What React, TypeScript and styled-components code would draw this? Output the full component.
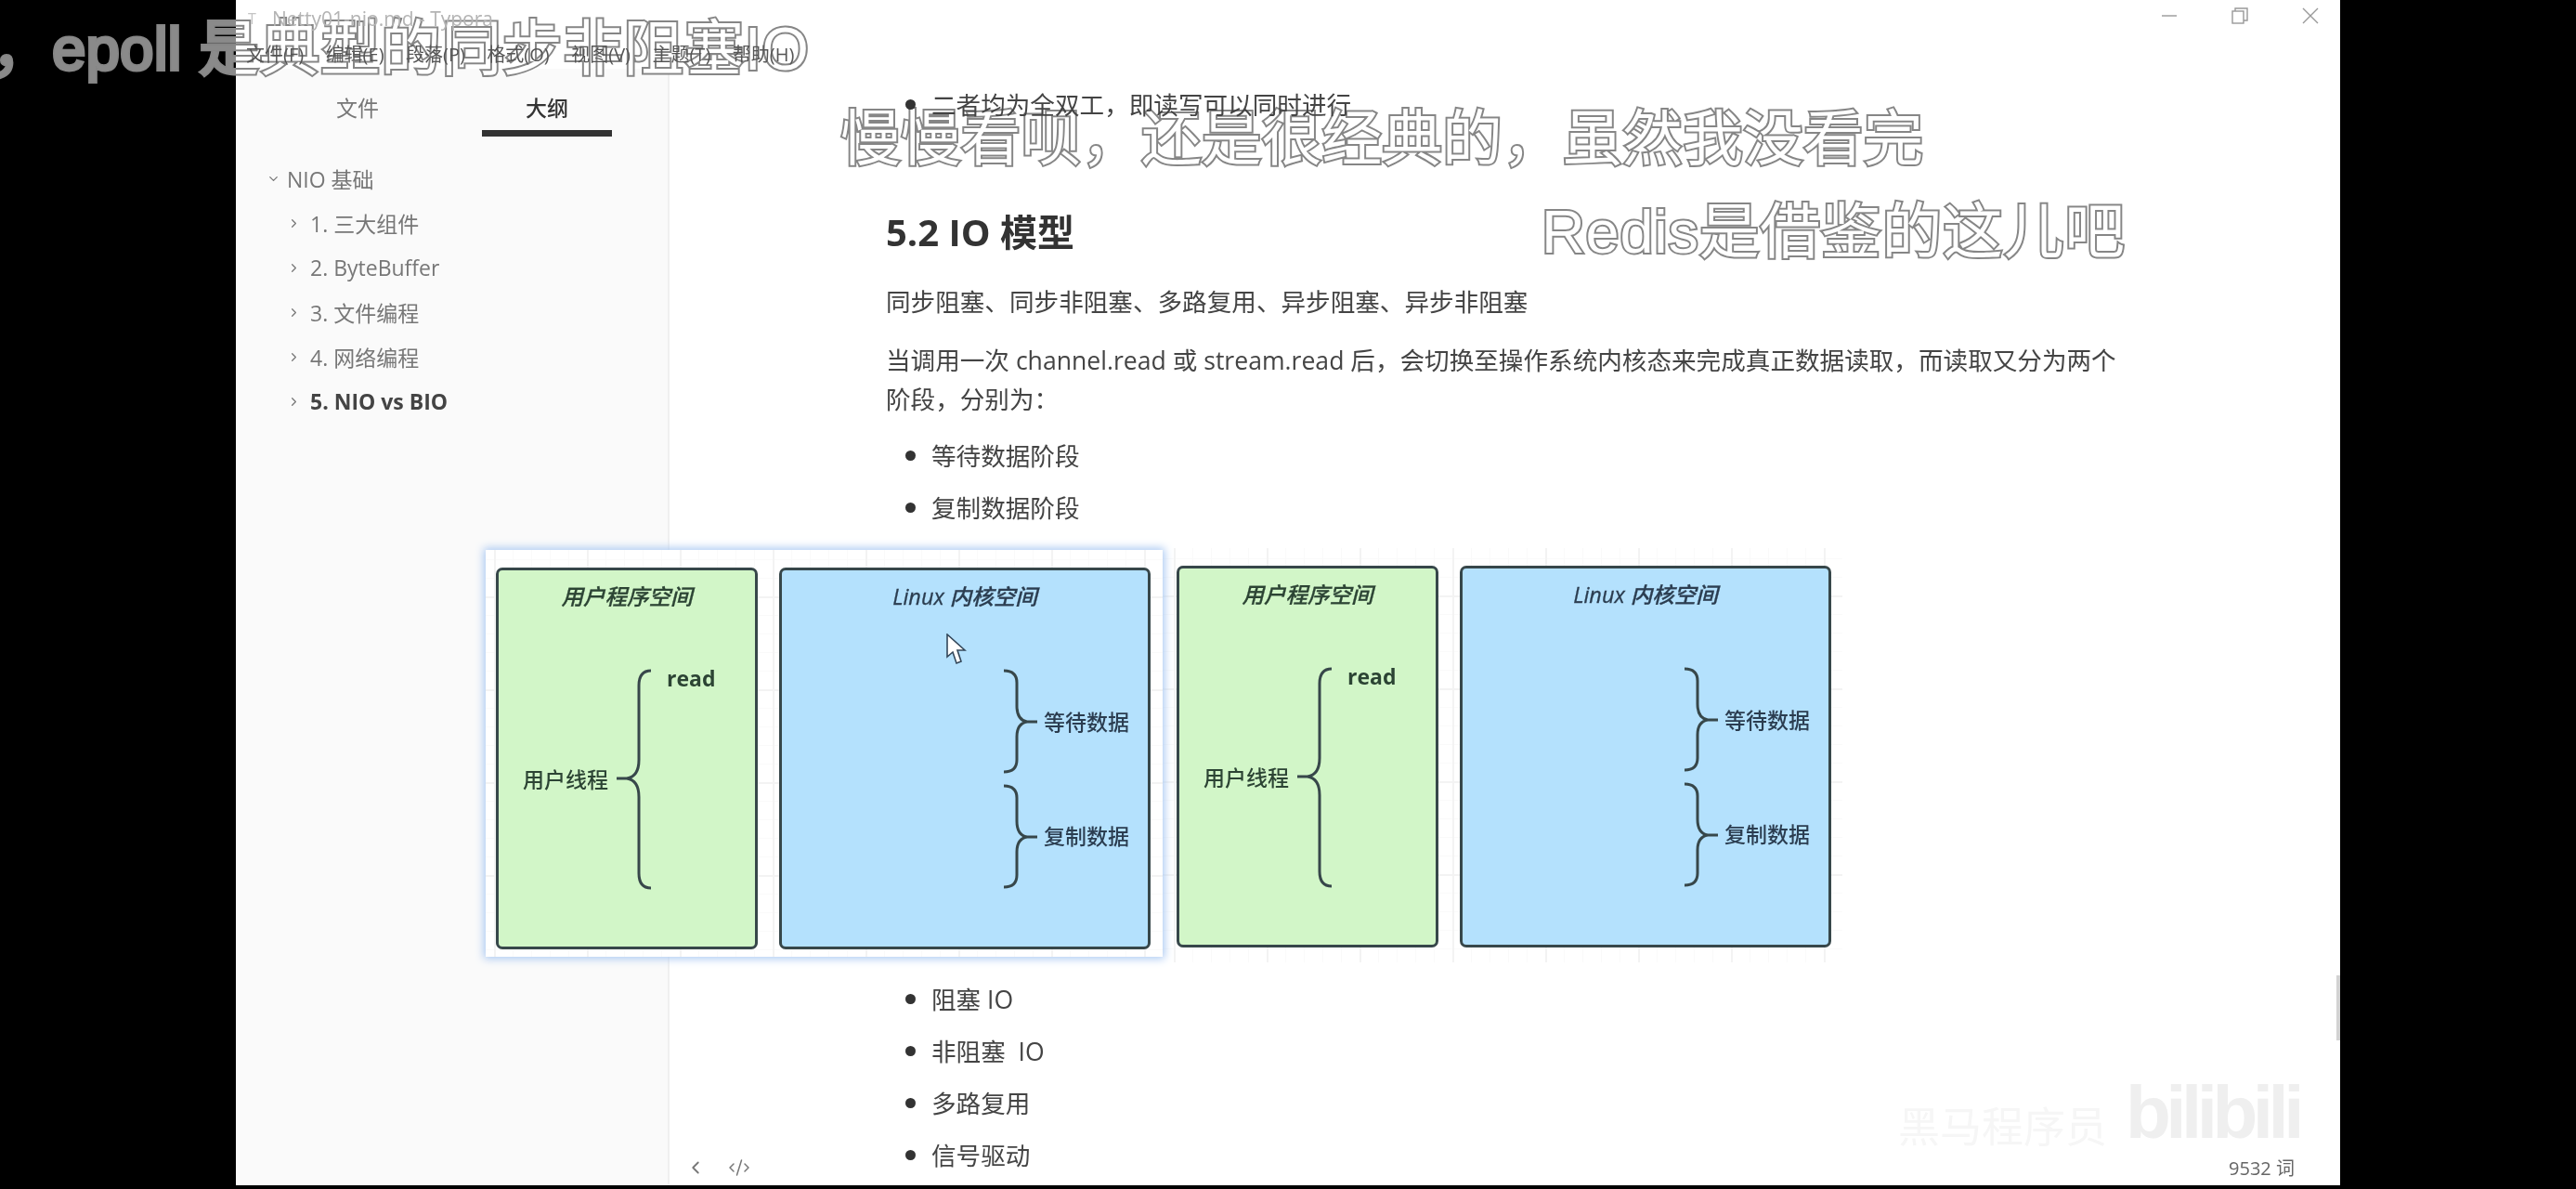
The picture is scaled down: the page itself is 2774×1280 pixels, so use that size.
import * as React from 'react'
import styled, {createGlobalStyle} from 'styled-components'
import {ChevronDown, ChevronLeft, ChevronRight, CodeXml} from 'lucide-react'

const GlobalStyle = createGlobalStyle`
  html, body {
    margin: 0;
    padding: 0;
    background: #000;
  }
  * {
    box-sizing: border-box;
  }
`

const Page = styled.div`
  position: relative;
  display: flex;
  width: 2774px;
  height: 1280px;
  overflow: hidden;
  background: #000;
  color: #333;
  font-family: "Open Sans", "Noto Sans CJK SC", sans-serif;
`

// the video's black side bars, captions show through them as flat gray
const Side = styled.div`
  position: relative;
  z-index: 3;
  flex: 0 0 254px;
  background: #8a8a8a;
  mix-blend-mode: darken;
`

const Window = styled.div`
  position: relative;
  display: flex;
  flex-direction: column;
  flex: 0 0 2266px;
  height: 1276px;
  background: #fff;
`

const TitleBar = styled.div`
  position: relative;
  z-index: 2;
  display: flex;
  align-items: center;
  height: 40px;
  padding-left: 13px;
  color: #b4b4b4;
  font-size: 21px;
`

const AppIcon = styled.span`
  width: 26px;
  font-size: 16px;
  color: #c4c4c4;
`

const WindowControls = styled.div`
  display: flex;
  align-items: center;
  gap: 58px;
  margin-left: auto;
  padding: 0 23px 6px 0;
`

const MenuBar = styled.div`
  position: relative;
  z-index: 2;
  display: flex;
  align-items: center;
  gap: 23.5px;
  height: 34px;
  padding-left: 11px;
  font-size: 20px;
  color: #555;
`

const Body = styled.div`
  display: flex;
  flex: 1;
  min-height: 0;
`

const Sidebar = styled.aside`
  flex: 0 0 467px;
  background: #fafafa;
  border-right: 2px solid #f0f0f0;
`

const Tabs = styled.div`
  position: relative;
  z-index: 2;
  display: flex;
  gap: 64px;
  height: 73px;
  padding-left: 61px;
`

const Tab = styled.div<{$active?: boolean}>`
  width: 140px;
  padding-top: 27px;
  text-align: center;
  font-size: 23px;
  line-height: 30px;
  font-weight: ${p => (p.$active ? 500 : 400)};
  color: ${p => (p.$active ? '#333' : '#777')};
  border-bottom: 7px solid ${p => (p.$active ? '#333' : 'transparent')};
`

const Outline = styled.ul`
  margin: 21px 0 0;
  padding: 0;
  list-style: none;
`

const OutlineItem = styled.li<{$depth: number; $active?: boolean}>`
  display: flex;
  align-items: center;
  gap: ${p => (p.$depth ? 10 : 7)}px;
  height: 48px;
  padding-left: ${p => (p.$depth ? 55 : 33)}px;
  font-size: 23px;
  font-weight: ${p => (p.$active ? 700 : 400)};
  color: ${p => (p.$active ? '#444' : '#777')};

  svg {
    color: #777;
  }
`

const Main = styled.main`
  position: relative;
  z-index: 2;
  flex: 1;
  min-width: 0;
  padding: 17px 0 0 233px;
  font-size: 26.6px;
  line-height: 42px;
  color: #444;
`

const Bullets = styled.ul<{$top?: number}>`
  display: flex;
  flex-direction: column;
  gap: 13px;
  margin: ${p => p.$top || 0}px 0 0;
  padding: 0 0 0 49px;
`

const Bullet = styled.li`
  &::marker {
    color: #333;
    font-size: 30px;
  }
`

const Heading = styled.h2`
  margin: 90px 0 0;
  font-size: 40px;
  line-height: 52px;
  font-weight: 700;
  color: #333;
`

const Paragraph = styled.p<{$top: number}>`
  width: 1340px;
  margin: ${p => p.$top}px 0 0;
`

const Figures = styled.div`
  display: flex;
  align-items: flex-start;
  width: 1470px;
  margin: 24px 0 18px -431px;
`

const Figure = styled.div<{$selected?: boolean}>`
  position: relative;
  z-index: ${p => (p.$selected ? 1 : 0)};
  display: flex;
  flex: 0 0 auto;
  gap: 23px;
  width: ${p => (p.$selected ? 729 : 732)}px;
  height: ${p => (p.$selected ? 438 : 446)}px;
  margin-top: ${p => (p.$selected ? 0 : -2)}px;
  padding: ${p => (p.$selected ? '19px 0 0 11px' : '19px 0 0 15px')};
  background-color: #fff;
  background-image:
    linear-gradient(90deg, #f3f3f3 2px, transparent 2px),
    linear-gradient(#f3f3f3 2px, transparent 2px),
    linear-gradient(90deg, #fafafa 1px, transparent 1px),
    linear-gradient(#fafafa 1px, transparent 1px);
  background-size: 100px 100px, 100px 100px, 20px 20px, 20px 20px;
  background-position: ${p => (p.$selected ? '9px 50px' : '12px 51px')};
  box-shadow: ${p => (p.$selected ? '0 0 9px 2px #a9c8f2' : 'none')};
`

const Space = styled.div<{$kernel?: boolean}>`
  position: relative;
  flex: 0 0 ${p => (p.$kernel ? 400 : 282)}px;
  height: 411px;
  padding-top: 13px;
  background: ${p => (p.$kernel ? '#b4e1fd' : '#d2f6c8')};
  border: 3px solid #37474a;
  border-radius: 7px;
  color: ${p => (p.$kernel ? '#2b3d50' : '#2c4434')};
`

const SpaceTitle = styled.div`
  text-align: center;
  font-size: 23.5px;
  line-height: 30px;
  font-style: italic;
  font-weight: 500;
  -webkit-text-stroke: 0.3px currentColor;
`

const Label = styled.span<{$x: number; $y: number; $bold?: boolean}>`
  position: absolute;
  left: ${p => p.$x}px;
  top: ${p => p.$y}px;
  font-size: 23px;
  line-height: 30px;
  font-weight: ${p => (p.$bold ? 700 : 500)};
  white-space: nowrap;
`

const Drawing = styled.svg<{$x: number; $y: number}>`
  position: absolute;
  left: ${p => p.$x}px;
  top: ${p => p.$y}px;
  fill: none;
  stroke: #37474a;
  stroke-width: 3;
`

const Pointer = styled.svg`
  position: absolute;
  left: 177px;
  top: 68px;
`

const WindowFooter = styled.div`
  position: absolute;
  z-index: 2;
  right: 49px;
  bottom: 5px;
  left: 484px;
  display: flex;
  align-items: center;
  gap: 24px;
  color: #777;
`

const WordCount = styled.span`
  margin-left: auto;
  font-size: 20px;
  color: #666;
`

const Scrollbar = styled.div`
  position: absolute;
  top: 1050px;
  right: 0;
  width: 4px;
  height: 70px;
  background: #d2d2d2;
`

const Watermark = styled.div`
  position: absolute;
  right: 44px;
  bottom: 38px;
  display: flex;
  align-items: flex-end;
  gap: 20px;
`

const WatermarkName = styled.span`
  font-size: 45px;
  line-height: 50px;
  color: #f6f6f6;
`

const WatermarkLogo = styled.span`
  font-family: "Liberation Sans", sans-serif;
  font-size: 80px;
  line-height: 80px;
  font-weight: 700;
  letter-spacing: -5.5px;
  color: #efefef;
`

// sits under the window's text, over its background: white fill, gray edge
const Caption = styled.div<{$x: number; $y: number; $spacing?: number}>`
  position: absolute;
  z-index: 1;
  left: ${p => p.$x}px;
  top: ${p => p.$y}px;
  font-family: "Liberation Sans", "Noto Sans CJK SC", sans-serif;
  font-size: 64.8px;
  line-height: 72px;
  font-weight: 400;
  letter-spacing: ${p => p.$spacing || 0}px;
  white-space: nowrap;
  color: #fff;
  -webkit-text-stroke: 4px #868686;
  paint-order: stroke fill;
`

const menus = ['文件(F)', '编辑(E)', '段落(P)', '格式(O)', '视图(V)', '主题(T)', '帮助(H)']

const outline = [
  {text: 'NIO 基础', depth: 0},
  {text: '1. 三大组件', depth: 1},
  {text: '2. ByteBuffer', depth: 1},
  {text: '3. 文件编程', depth: 1},
  {text: '4. 网络编程', depth: 1},
  {text: '5. NIO vs BIO', depth: 1, active: true},
]

const LeftBrace = () => (
  <Drawing $x={127} $y={106} width="38" height="238" viewBox="0 0 38 238">
    <path d="M37 2Q24 2 24 18V98Q24 116 11 118H0M11 118Q24 120 24 138V220Q24 236 37 236" />
  </Drawing>
)

const RightBrace = ({y}: {y: number}) => (
  <Drawing $x={239} $y={y} width="36" height="113" viewBox="0 0 36 113">
    <path d="M0 2Q14 2 14 15V40Q14 55 25 57H36M25 57Q14 59 14 73V98Q14 111 0 111" />
  </Drawing>
)

const Diagram = ({selected}: {selected?: boolean}) => (
  <Figure $selected={selected}>
    <Space>
      <SpaceTitle>用户程序空间</SpaceTitle>
      <LeftBrace />
      <Label $x={181} $y={101} $bold>read</Label>
      <Label $x={26} $y={210}>用户线程</Label>
    </Space>
    <Space $kernel>
      <SpaceTitle>Linux 内核空间</SpaceTitle>
      <RightBrace y={106} />
      <RightBrace y={230} />
      <Label $x={282} $y={148}>等待数据</Label>
      <Label $x={282} $y={271}>复制数据</Label>
      {selected && (
        <Pointer width="22" height="34" viewBox="0 0 22 34">
          <path d="M1 1V25L7 20L11 32L16 30L12 18H20Z" fill="#fff" stroke="#33475a" strokeWidth="1.6" />
        </Pointer>
      )}
    </Space>
  </Figure>
)

const App = () => {
  return (
    <Page>
      <GlobalStyle />
      <Side />
      <Window>
        <TitleBar>
          <AppIcon>T</AppIcon>
          Netty01-nio.md - Typora
          <WindowControls>
            <svg width="18" height="18" viewBox="0 0 18 18" fill="none" stroke="#999" strokeWidth="1.4">
              <path d="M1 9H17" />
            </svg>
            <svg width="18" height="18" viewBox="0 0 18 18" fill="none" stroke="#999" strokeWidth="1.4">
              <rect x="1" y="4" width="12" height="13" />
              <path d="M4 4V1H17V14H13" />
            </svg>
            <svg width="18" height="18" viewBox="0 0 18 18" fill="none" stroke="#999" strokeWidth="1.4">
              <path d="M1 1L17 17M17 1L1 17" />
            </svg>
          </WindowControls>
        </TitleBar>
        <MenuBar>
          {menus.map(m => (
            <span key={m}>{m}</span>
          ))}
        </MenuBar>
        <Body>
          <Sidebar>
            <Tabs>
              <Tab>文件</Tab>
              <Tab $active>大纲</Tab>
            </Tabs>
            <Outline>
              {outline.map(item => (
                <OutlineItem key={item.text} $depth={item.depth} $active={item.active}>
                  {item.depth ? <ChevronRight size={15} /> : <ChevronDown size={15} />}
                  {item.text}
                </OutlineItem>
              ))}
            </Outline>
          </Sidebar>
          <Main>
            <Bullets>
              <Bullet>二者均为全双工，即读写可以同时进行</Bullet>
            </Bullets>
            <Heading>5.2 IO 模型</Heading>
            <Paragraph $top={28}>同步阻塞、同步非阻塞、多路复用、异步阻塞、异步非阻塞</Paragraph>
            <Paragraph $top={21}>
              当调用一次 channel.read 或 stream.read 后，会切换至操作系统内核态来完成真正数据读取，而读取又分为两个阶段，分别为：
            </Paragraph>
            <Bullets $top={18}>
              <Bullet>等待数据阶段</Bullet>
              <Bullet>复制数据阶段</Bullet>
            </Bullets>
            <Figures>
              <Diagram selected />
              <Diagram />
            </Figures>
            <Bullets>
              <Bullet>阻塞 IO</Bullet>
              <Bullet>非阻塞 &nbsp;IO</Bullet>
              <Bullet>多路复用</Bullet>
              <Bullet>信号驱动</Bullet>
            </Bullets>
          </Main>
        </Body>
        <Watermark>
          <WatermarkName>黑马程序员</WatermarkName>
          <WatermarkLogo>bilibili</WatermarkLogo>
        </Watermark>
        <WindowFooter>
          <ChevronLeft size={22} />
          <CodeXml size={24} strokeWidth={1.5} />
          <WordCount>9532 词</WordCount>
        </WindowFooter>
        <Scrollbar />
      </Window>
      <Side />
      <Caption $x={-9} $y={17} $spacing={0.5}>，epoll 是典型的同步非阻塞IO</Caption>
      <Caption $x={905} $y={114}>慢慢看呗，还是很经典的，虽然我没看完</Caption>
      <Caption $x={1660} $y={214} $spacing={0.8}>Redis是借鉴的这儿吧</Caption>
    </Page>
  )
}

export default App
